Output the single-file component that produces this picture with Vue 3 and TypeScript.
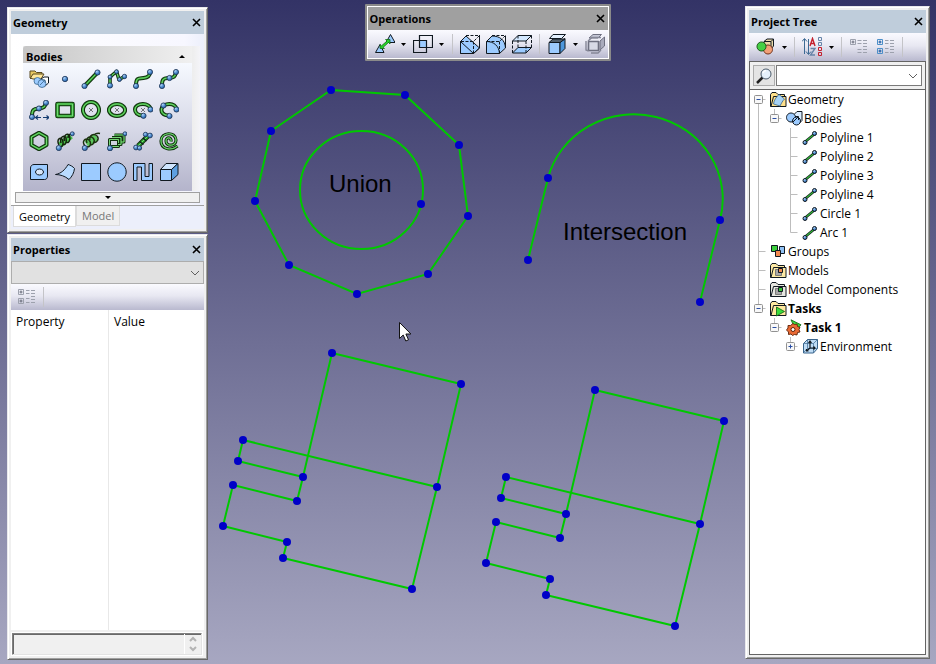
<script setup lang="ts">
import { ref } from 'vue'

type Point = [number, number]

/* ---------- icon drawing helpers ---------- */
const INK = '#101820'
const BODY = '#9ccbff'

const line = (d: string, width = 1, color = INK, extra = '') =>
  `<path d="${d}" fill="none" stroke="${color}" stroke-width="${width}" ${extra}/>`
const shape = (d: string, fill: string, color = INK, width = 1) =>
  `<path d="${d}" fill="${fill}" stroke="${color}" stroke-width="${width}" stroke-linejoin="round"/>`
const dot = (x: number, y: number, r = 2.6) =>
  `<circle cx="${x}" cy="${y}" r="${r}" fill="url(#ball)" stroke="#1d3557" stroke-width="0.8"/>`
const tube = (d: string, width = 4.4) =>
  line(d, width, '#12300f', 'stroke-linejoin="round"') +
  line(d, width - 2, '#2aa52a', 'stroke-linejoin="round"') +
  line(d, 0.8, '#8be08b', 'stroke-linejoin="round"')
const cross = line('M8 8L12 12M12 8L8 12', 0.8, '#555')
const folder = (fill: string) =>
  shape('M.5 15.500V3.500l1.500-2h4l2 2h6.500v12z', fill) + shape('M1 15.500L3.500 5.500h12.500v10z', fill)

const bodyIcons: { name: string; art: string }[] = [
  {
    name: 'Import bodies',
    art:
      shape('M1 9V2h5l1.500 1.500H13V6H4L2 10z', '#e8c860', '#5a4a20') +
      shape('M1.500 9L4 5h11l-3 5H4z', '#ffe79a', '#5a4a20') +
      shape('M12 10l3-2h4.500v6L16 17z', '#ffffff') +
      `<circle cx="8.500" cy="12" r="3.500" fill="${BODY}" stroke="#38648c" stroke-width="0.800"/>` +
      `<circle cx="13" cy="14.500" r="4" fill="${BODY}" stroke="#38648c" stroke-width="0.800"/>` +
      line('M11 16l5-5M13 11h3v3', 0.8, '#38648c'),
  },
  { name: 'Point', art: dot(10, 10, 2.7) },
  { name: 'Line', art: tube('M3.500 17L16.500 3.500', 4) + dot(3.5, 17) + dot(16.5, 3.5) },
  {
    name: 'Polyline',
    art:
      tube('M3 16.500L3 8L9.500 2.500L12 10.500L17.500 7.500', 3.6) +
      dot(3, 16.5) + dot(3, 8, 2) + dot(9.5, 2.8, 2) + dot(12.5, 10.5, 2) + dot(17.5, 7.5, 2.2),
  },
  { name: 'Curve', art: tube('M3 16.500C3 8 6 9.500 10.500 9S17 7 17 3', 4) + dot(3, 17) + dot(17, 3) },
  {
    name: 'Spline',
    art: tube('M3 16.500C3 9 5 9.500 10 9S16 8 17 3', 4) + dot(3, 17) + dot(10.5, 9) + dot(17, 3),
  },
  {
    name: 'Curve by dimension',
    art:
      tube('M3 16C3 9 5 9 10 8.500S16 7 17 2.500', 4) + dot(3, 17) + dot(10, 8.5) + dot(17, 2.8) +
      line('M7 17.500h5M14 17.500h5.500M9 15.500l-2.500 2L9 19.500M17.500 15.500l2.500 2l-2.500 2', 1.1, '#123a70'),
  },
  { name: 'Rectangle', art: tube('M2.500 4h15v12h-15z', 4.6) },
  { name: 'Circle', art: tube('M10 2a8 8 0 1 0 .01 0z', 4) + cross },
  { name: 'Ellipse', art: tube('M10 4a8 6 0 1 0 .01 0z', 4) + cross },
  {
    name: 'Ellipse arc',
    art: tube('M10 15.500C4 15.500 2 12 2 9.500C2 2.500 17.500 2 17.500 9.500', 4) + cross + dot(10.5, 15.8) + dot(17.5, 9.5),
  },
  {
    name: 'Three-point arc',
    art:
      tube('M10 15.500C4 15.500 2 12 2.500 9C4 2.500 17 2 17.500 9.500', 4) + dot(4.5, 5.5) + dot(10.5, 16) + dot(17.5, 9.5),
  },
  { name: 'Polygon', art: tube('M10 1.800L17.500 6V14L10 18.200L2.500 14V6z', 4) },
  {
    name: 'Helix',
    art:
      line('M5 14L16 5', 6, '#49c049') +
      line('M4 14C1 8 6 5 7.500 9S7 17 5.500 15M6 12C4 6 10 3 11 7S10 15 8.500 13M9.500 10C8 4 13 1 14.500 5S13 13 12 11M13 7c0-3 2-4 4-4', 1.5, '#14240c') +
      dot(3.8, 17) + dot(17.3, 2.8, 2),
  },
  {
    name: 'Conical helix',
    art:
      line('M5.500 13L15.500 6', 8, '#5cc65c') +
      line('M4 15C0 10 5 6 8 9S9 17 6 15.500M6 12C4 7 9 4 12 7S12 15 9 13.500M9 9C8 4 13 2 16 5S15 13 12 11M13 4c2-2 4-2 6-1.500', 1.4, '#1c3010') +
      dot(3.8, 17),
  },
  {
    name: 'Rectangular helix',
    art:
      tube('M2.500 8.500h9v7h-9z', 3) + tube('M5 6.500h9v7H11M7.500 4h9.500v7H14', 3) + dot(3, 17.2) + dot(18, 2.8, 2),
  },
  {
    name: 'Twisted line',
    art:
      tube('M5 15L15 5', 5) + line('M6.500 10.500l4 3M10 7l3.500 3', 1.1) +
      dot(3, 16.5, 2.4) + dot(6.5, 17, 2.2) + dot(12.5, 3.5, 2.2) + dot(17, 4.5, 2.4),
  },
  {
    name: 'Spiral',
    art: tube('M18.500 15C12 20.500 2 18 2 10C2 1 16.500 0 17 9C17 15.500 7 16 7 10C7 5.500 13 6 12 10.500', 3.2),
  },
  {
    name: 'Plate with hole',
    art:
      shape('M1.500 17.500V6C1.500 4 3 2.500 5 2.500h13.500V14c0 2-1 3.500-3 3.500z', BODY) +
      shape('M10.500 7a4 3 0 1 0 .01 0z', '#d8e6f8'),
  },
  { name: 'Surface', art: shape('M.5 12.500C6 11.500 10 8 13 2.500C15 3 18 4.500 19.500 6.500C19 11 17 14.500 14 17.500C10 14 5 12.500 .5 12.500z', '#b9dbff') },
  { name: 'Rectangular face', art: shape('M.5 1.500h19v17h-19z', BODY) },
  { name: 'Circular face', art: shape('M10 .8a9.200 9.200 0 1 0 .01 0z', BODY) },
  { name: 'Strip', art: shape('M.5 1.500h11.500v13h4v-13h3.500v17H8.500V5H4v13.500H.5z', BODY) },
  {
    name: 'Box',
    art:
      shape('M1.500 7.500h11v11h-11z', BODY) + shape('M1.500 7.500L7 1.500h12L12.500 7.500z', '#cfe5ff') +
      shape('M12.500 7.500L19 1.500v11l-6.500 6z', '#5d9fe0'),
  },
]

const treeToggle = (color: string, box: string) =>
  line('M2.500 2.500h5v5h-5zM2.500 11.500h5v5h-5z', 1, box) +
  line('M3.500 5h3M5 3.500v3M3.500 14h3M5 12.500v3', 1, color) +
  line('M10 3.500h3.500M10 6.500h3.500M10 11.500h3.500M10 15.500h3.500M15 3.500h4M15 6.500h4M15 9.500h4M15 12.500h4M15 15.500h4', 1, '#9da1ad')

const art = {
  transform:
    shape('M.5 18.500L5 10.500l4 8z', BODY) + shape('M11 8.500l4.500-8L20 8.500z', BODY) +
    shape('M5 14.500V10.500l1.500 1.300L12 7L10.500 5.500h4.500V10L13.500 8.500L8 13.500L9.500 14.500z', '#28d42c', '#0d6010', 0.7),
  boolean: shape('M6.500 6.500h7v7h-7z', BODY) + line('M6.500 1.500h13v12h-13zM.5 6.500h13v12H.5z', 1.2),
  chamfer:
    shape('M.5 7.500L6 2l13.500 12-6 5.500H.5z', BODY) + line('M.5 7.500L13.500 19.500M.5 7.500v12M13.500 19.500l6-5.500V1') +
    line('M6 1.500h13.500L13.500 7.500H.5M13.500 7.500v12', 1, INK, 'stroke-dasharray="3 1.5"'),
  fillet:
    shape('M.5 7.500L6 2c8 0 13 4 13.500 12l-6 5.500H.5z', BODY) + line('M.5 7.500C8 7.500 13 12 13.500 19.500M19.500 14V2') +
    line('M6 1.500h13.500L13.500 7.500H.5M13.500 7.500v12', 1, INK, 'stroke-dasharray="3 1.5"'),
  shell:
    shape('M.5 7L6 1.500h13.500L14 7z', '#d3e8ff') + shape('M.5 19L6 13.500h13.500L14 19z', BODY) +
    line('M.5 7v12M14 7v12M6 1.500v12M19.500 1.500v12', 1, INK, 'stroke-dasharray="3 1.5"'),
  extrude:
    shape('M2 8.500h11v11H2z', BODY) + shape('M13 8.500l5-4v10l-5 5z', '#4d97dc') + shape('M2 8.500l4-3.500h12l-5 3.500z', '#52606e') +
    shape('M2.500 4.500L6 .5h12.500L14.500 4.500z', '#e4f1ff'),
  hollow:
    shape('M4 4l4-3.500h8.500L13 4z', '#c5c7d6', '#6e7080') + shape('M15 7l4.500-4v9L15 16z', '#a9abbc', '#6e7080') +
    shape('M3.500 7.500h10v9h-10z', '#d8dae6', '#6e7080', 1.6) + line('M1 7v9l2.500 1M6 19h7l3-3M3 7l4-3.500h9', 1.4, '#858797'),
  display:
    shape('M9 4.500L12 2h6.500v7L16 12H9z', '#ead9a8') + line('M9 4.500h7V12M16 4.500L18.500 2') +
    shape('M13 8a4.500 4.500 0 1 0 .01 0z', '#f2a078', '#6e3018') + shape('M6.500 5a4.500 4.500 0 1 0 .01 0z', '#45cf45', '#174d17'),
  sort:
    line('M2.500 17V2M0 4.500L2.500 1.500L5 4.500M6.500 2v15M4 14.500L6.500 17.500L9 14.500', 1, '#3d6a94') +
    line('M8 9L10.500 1.500L13 9M9 6.500h3.500', 1.4, '#c4202c') + line('M8.500 11.500h4.500L8.500 18h4.500', 1.4, '#6784a8') +
    line('M16.500.500h3v3h-3zM16.500 5.500h3v3h-3z', 1, '#6784a8') + line('M16.500 10.500h3v3h-3zM16.500 15.500h3v3h-3z', 1, '#c4202c'),
  collapse:
    line('M1.500 2.500h5v5h-5z', 1, '#9da1ad') + line('M2.500 5h3M4 3.500v3', 1, '#666b78') +
    line('M8.500 3.500h4M8.500 6.500h4M14 3.500h4M14 6.500h4M14 9.500h4M8.500 12.500h4M14 12.500h4M8.500 15.500h4M14 15.500h4', 1, '#9da1ad'),
  expand: treeToggle('#0b4f9c', '#4c8fc9'),
  expandOff: treeToggle('#666b78', '#9da1ad'),
} as const

/* ---------- project tree ---------- */
const smallDot = (x: number, y: number) => `<circle cx="${x}" cy="${y}" r="2" fill="url(#ball)" stroke="${INK}" stroke-width="1"/>`
const treeArt: Record<string, string> = {
  geometry: folder('#ffe08a') + shape('M3.500 13C4 9.500 6 6 9 3.500l5.500 4.500c-2 2-3 4-4.500 7z', '#a6d2f5', '#38648c', 0.8),
  bodies:
    shape('M8 4.500L11 1.500h5v9l-3 3z', '#d9ecff') + shape('M5 3a4.500 4.500 0 1 0 .01 0z', BODY) +
    shape('M10.500 7a4 4 0 1 0 .01 0z', BODY) + line('M7 12l5-5M9 6.500h3.500V10'),
  line: line('M3.500 12.500L12.500 5', 2.6, INK) + line('M3.500 12.500L12.500 5', 1.2, '#35b835') + smallDot(3, 13.5) + smallDot(12.5, 4.5),
  groups: shape('M1.500 2.500h6v6h-6z', '#3ccf3c') + shape('M9.500 3.500h5v7h-5z', '#8fc1f5') + shape('M5.500 7.500h5v6h-5z', '#f28a50'),
  models: folder('#fde9a4') + shape('M5.500 7.500h3v3h3v3h-6z', '#a8a8a8', '#666', 0.8) + shape('M8.500 6.500h4v4h-4z', '#f28a50'),
  components: folder('#e6e6e0') + shape('M5.500 7.500h3v3h3v3h-6z', '#a8a8a8', '#666', 0.8) + shape('M8.500 6.500h4v4h-4z', '#35c435'),
  tasks: folder('#ffe9a0') + shape('M6.500 7l8 4.500l-8 4.500z', '#3bdc3b', '#0d6010', 0.8),
  task:
    shape('M5 .8l10 5-5 6z', '#3bdc3b', '#0d6010', 0.8) +
    shape('M7 4.500l1.500 1 2.500-.500.500 2.500 2.500 1-1 2 1 2.500-2.500.500-.500 2.500-2.500-.500L6.500 16.500l-1.500-1.500-2.500.500v-2.500L.5 11 2 9 2 6.500l2.500 0z', '#ea6a34', '#5c2208', 0.9) +
    '<circle cx="7" cy="10.500" r="2" fill="#fff" stroke="#5c2208"/>',
  environment:
    shape('M1.500 5.500L5.500 1.500h10v9l-4 4.500h-10z', '#bfdcf5', '#38648c') + line('M1.500 5.500h10v9.500M11.500 5.500l4-4M5.500 1.500v9h10M5.500 10.500l-4 4', 0.7, '#38648c') +
    line('M8 3v7M6.500 5L8 3l1.500 2M8 10h5M11.500 8.500l1.500 1.500-1.500 1.500M8 10l-3.500 3M4.500 11v2h2', 1.2),
}

interface TreeRow {
  label: string
  icon: string
  level: number
  toggle?: 'open' | 'closed'
  rails?: number[]
  first?: boolean
  last?: boolean
  strong?: boolean
}
const tree: TreeRow[] = [
  { label: 'Geometry', icon: 'geometry', level: 0, toggle: 'open', first: true },
  { label: 'Bodies', icon: 'bodies', level: 1, toggle: 'open', rails: [0], last: true },
  ...['Polyline 1', 'Polyline 2', 'Polyline 3', 'Polyline 4', 'Circle 1'].map((label) => ({ label, icon: 'line', level: 2, rails: [0] })),
  { label: 'Arc 1', icon: 'line', level: 2, rails: [0], last: true },
  { label: 'Groups', icon: 'groups', level: 0 },
  { label: 'Models', icon: 'models', level: 0 },
  { label: 'Model Components', icon: 'components', level: 0 },
  { label: 'Tasks', icon: 'tasks', level: 0, toggle: 'open', last: true, strong: true },
  { label: 'Task 1', icon: 'task', level: 1, toggle: 'open', last: true, strong: true },
  { label: 'Environment', icon: 'environment', level: 2, toggle: 'closed', last: true },
]
const railX = (level: number) => 8.5 + 16 * level
const guides = (row: TreeRow) => {
  const x = railX(row.level)
  const own = `M${x} ${row.first ? 9.5 : 0}V${row.last ? 9.5 : 19}M${x} 9.5h7`
  return (row.rails ?? []).map((r) => `M${railX(r)} 0V19`).join('') + own
}

/* ---------- drawing ---------- */
const polygon: Point[] = [[331, 90], [405, 95], [459, 145], [468, 216], [428, 274], [357, 294], [289, 265], [255, 201], [271, 131]]
const outline: Point[] = [[332, 353], [461, 384], [437, 487], [412, 589], [283, 558], [287, 542], [223, 526], [233, 485], [297, 501], [303, 477]]
const branch: Point[] = [[303, 477], [238, 461], [243, 440], [437, 487]]
const copies: Point[] = [[0, 0], [263, 37]]
const arcNodes: Point[] = [[548, 178], [528, 260], [720, 220], [700, 302]]
const toPoints = (points: Point[]) => points.map((p) => p.join(',')).join(' ')

const tab = ref('Geometry')
const query = ref('')
</script>

<template>
  <main class="workspace">
    <svg class="viewport" viewBox="0 0 936 664" preserveAspectRatio="xMidYMid slice" aria-label="Model view">
      <defs>
        <radialGradient id="ball" cx="0.35" cy="0.3" r="0.8">
          <stop offset="0" stop-color="#b5d6f7" />
          <stop offset="0.5" stop-color="#4f8dd0" />
          <stop offset="1" stop-color="#1f5596" />
        </radialGradient>
      </defs>
      <g class="edges">
        <polygon :points="toPoints(polygon)" />
        <ellipse cx="361.5" cy="190" rx="61.5" ry="59" />
        <path d="M528 260L548 178A88.500 84.500 0 0 1 720 220L700 302" />
        <g v-for="([x, y], i) in copies" :key="i" :transform="`translate(${x} ${y})`">
          <polygon :points="toPoints(outline)" />
          <polyline :points="toPoints(branch)" />
        </g>
      </g>
      <g class="nodes">
        <circle v-for="([x, y], i) in [...polygon, ...arcNodes]" :key="i" :cx="x" :cy="y" r="4" />
        <circle cx="421" cy="204" r="4" />
        <g v-for="([dx, dy], c) in copies" :key="c" :transform="`translate(${dx} ${dy})`">
          <circle v-for="([x, y], i) in [...outline, ...branch.slice(1, 3)]" :key="i" :cx="x" :cy="y" r="4" />
        </g>
      </g>
      <text x="329" y="192">Union</text>
      <text x="563" y="240">Intersection</text>
      <path class="pointer" d="M399.500 322.500v16l3.700-3.500 2.600 6 2.700-1.200-2.600-5.800h5z" />
    </svg>

    <div class="layout">
      <div class="left">
        <section class="panel">
          <header class="title">
            <h2>Geometry</h2>
            <button class="close" aria-label="Close Geometry"><svg viewBox="0 0 9 9"><path d="M1 1l7 7M8 1L1 8" /></svg></button>
          </header>
          <div class="geometry">
            <div class="toolbox">
              <button class="group">
                Bodies
                <svg width="6" height="3"><path d="M0 3L3 0L6 3z" /></svg>
              </button>
              <div class="palette">
                <button v-for="tool in bodyIcons" :key="tool.name" :aria-label="tool.name">
                  <svg width="20" height="20" v-html="tool.art"></svg>
                </button>
              </div>
            </div>
            <button class="more" aria-label="More tools"><svg width="6" height="3"><path d="M0 0L3 3L6 0z" /></svg></button>
            <nav class="tabs">
              <button v-for="name in ['Geometry', 'Model']" :key="name" :class="{ active: tab === name }" @click="tab = name">{{ name }}</button>
            </nav>
          </div>
        </section>

        <section class="panel properties">
          <header class="title">
            <h2>Properties</h2>
            <button class="close" aria-label="Close Properties"><svg viewBox="0 0 9 9"><path d="M1 1l7 7M8 1L1 8" /></svg></button>
          </header>
          <div class="picker">
            <select aria-label="Object" disabled></select>
            <svg width="10" height="6"><path d="M1 1l4 4 4-4" /></svg>
          </div>
          <div class="toolbar short">
            <button class="tool" aria-label="Expand all" disabled><svg width="20" height="20" v-html="art.expandOff"></svg></button>
            <i class="sep"></i>
          </div>
          <table>
            <thead>
              <tr><th>Property</th><th>Value</th></tr>
            </thead>
            <tbody>
              <tr><td></td><td></td></tr>
            </tbody>
          </table>
          <div class="hint">
            <textarea aria-label="Description" readonly></textarea>
            <span class="spin"><svg width="8" height="16"><path d="M1 5l3-3 3 3M1 11l3 3 3-3" /></svg></span>
          </div>
        </section>
      </div>

      <div class="center">
        <section class="operations">
          <header class="title">
            <h2>Operations</h2>
            <button class="close" aria-label="Close Operations"><svg viewBox="0 0 9 9"><path d="M1 1l7 7M8 1L1 8" /></svg></button>
          </header>
          <div class="toolbar">
            <button class="tool" aria-label="Transform"><svg width="20" height="20" v-html="art.transform"></svg></button>
            <button class="caret" aria-label="Transform options"><svg width="5" height="3"><path d="M0 0h5L2.500 3z" /></svg></button>
            <button class="tool" aria-label="Boolean"><svg width="20" height="20" v-html="art.boolean"></svg></button>
            <button class="caret" aria-label="Boolean options"><svg width="5" height="3"><path d="M0 0h5L2.500 3z" /></svg></button>
            <i class="sep"></i>
            <button class="tool" aria-label="Chamfer"><svg width="20" height="20" v-html="art.chamfer"></svg></button>
            <button class="tool" aria-label="Fillet"><svg width="20" height="20" v-html="art.fillet"></svg></button>
            <button class="tool" aria-label="Shell"><svg width="20" height="20" v-html="art.shell"></svg></button>
            <i class="sep"></i>
            <button class="tool" aria-label="Extrude"><svg width="20" height="20" v-html="art.extrude"></svg></button>
            <button class="caret" aria-label="Extrude options"><svg width="5" height="3"><path d="M0 0h5L2.500 3z" /></svg></button>
            <button class="tool" aria-label="Hollow" disabled><svg width="20" height="20" v-html="art.hollow"></svg></button>
          </div>
        </section>
      </div>

      <section class="panel project">
        <header class="title">
          <h2>Project Tree</h2>
          <button class="close" aria-label="Close Project Tree"><svg viewBox="0 0 9 9"><path d="M1 1l7 7M8 1L1 8" /></svg></button>
        </header>
        <div class="toolbar">
          <button class="tool" aria-label="Display"><svg width="20" height="20" v-html="art.display"></svg></button>
          <button class="caret" aria-label="Display options"><svg width="5" height="3"><path d="M0 0h5L2.500 3z" /></svg></button>
          <i class="sep"></i>
          <button class="tool" aria-label="Sort"><svg width="20" height="20" v-html="art.sort"></svg></button>
          <button class="caret" aria-label="Sort options"><svg width="5" height="3"><path d="M0 0h5L2.500 3z" /></svg></button>
          <i class="sep"></i>
          <button class="tool" aria-label="Collapse all" disabled><svg width="20" height="20" v-html="art.collapse"></svg></button>
          <button class="tool" aria-label="Expand all"><svg width="20" height="20" v-html="art.expand"></svg></button>
          <i class="sep"></i>
        </div>
        <form class="search" @submit.prevent>
          <button class="find" aria-label="Search">
            <svg width="18" height="18">
              <path d="M2 16L7.500 10.500" stroke="#222" stroke-width="2.500" />
              <circle cx="11" cy="7" r="5" fill="#e6f1fb" stroke="#4a5a6a" />
              <path d="M8 6a3.500 3.500 0 0 1 3-2.500" fill="none" stroke="#fff" stroke-width="1.500" />
            </svg>
          </button>
          <div class="combo">
            <input v-model="query" aria-label="Search the project" />
            <button type="button" aria-label="Recent searches"><svg width="10" height="6"><path d="M1 1l4 4 4-4" /></svg></button>
          </div>
        </form>
        <ul class="tree">
          <li v-for="row in tree" :key="row.label" :class="{ strong: row.strong }">
            <svg :width="20 + 16 * row.level" height="19">
              <path class="guide" :d="guides(row)" />
              <template v-if="row.toggle">
                <rect class="box" :x="railX(row.level) - 4" y="5.5" width="8" height="8" rx="1" />
                <path class="sign" :d="`M${railX(row.level) - 2} 9.5h4` + (row.toggle === 'closed' ? `m-2 -2v4` : '')" />
              </template>
            </svg>
            <svg width="18" height="17" v-html="treeArt[row.icon]"></svg>
            <span>{{ row.label }}</span>
          </li>
        </ul>
      </section>
    </div>
  </main>
</template>

<style>
body {
  margin: 0;
}
</style>

<style scoped>
.workspace {
  position: relative;
  min-height: 100vh;
  display: flex;
  background: linear-gradient(#333366, #a7a7c1);
  font: 12px/16px 'Open Sans', 'Noto Sans', sans-serif;
  color: #000;
}
.workspace * {
  box-sizing: border-box;
}
.viewport {
  position: absolute;
  inset: 0;
  width: 100%;
  height: 100%;
}
.edges {
  fill: none;
  stroke: #00c800;
  stroke-width: 2;
}
.nodes {
  fill: #0000c8;
}
.viewport text {
  font: 24px 'Liberation Sans', sans-serif;
}
.pointer {
  fill: #fff;
  stroke: #111;
}
.layout {
  position: relative;
  flex: 1;
  display: flex;
  min-width: 0;
  padding: 4px 6px 4px 7px;
}
button {
  border: 0;
  padding: 0;
  background: none;
  font: inherit;
  color: inherit;
  display: flex;
  align-items: center;
  justify-content: center;
}
svg {
  display: block;
  flex: none;
}

/* windows */
.panel {
  display: flex;
  flex-direction: column;
  padding: 3px;
  background: #f0f0f0;
  border: 1px solid;
  border-color: #e9e9ec #696969 #696969 #e9e9ec;
  box-shadow: inset 1px 1px #fff, inset -1px -1px #a0a0a0;
}
.title {
  display: flex;
  align-items: center;
  justify-content: space-between;
  height: 23px;
  padding: 0 3px 0 2px;
  background: #bfcddb;
}
.title h2 {
  margin: 0;
  font-size: 11px;
  font-weight: 700;
}
.close svg {
  width: 9px;
  height: 9px;
  fill: none;
  stroke: #000;
  stroke-width: 1.6;
}
.left {
  display: flex;
  flex-direction: column;
  gap: 1px;
  width: 201px;
  padding-top: 3px;
}
.center {
  flex: 1;
  display: flex;
  justify-content: center;
  align-items: flex-start;
  padding-left: 22px;
}
.project {
  width: 185px;
  margin: 2px 0 1px;
}

/* geometry palette */
.geometry {
  background: linear-gradient(to right, #fff, #f7f7ff 90%, #eceffb);
}
.toolbox {
  margin: 12px 4px 0 12px;
  padding-right: 8px;
  background: linear-gradient(to right, #eee 96%, #f4f4f8);
}
.group {
  display: flex;
  justify-content: space-between;
  width: 100%;
  height: 17px;
  padding: 4px 7px 0 3px;
  font-size: 11px;
  font-weight: 700;
  border-radius: 3px 0 0;
  background: linear-gradient(to right, #c6c6c6, #f0f0f0);
}
.palette {
  display: grid;
  grid-template-columns: repeat(6, 26px);
  grid-auto-rows: 31px;
  padding: 0 0 4px 3px;
  background: linear-gradient(#f6f9ff, #d8dae8 50%, #b4b4cb);
}
.more {
  height: 11px;
  margin: 1px 4px 2px;
  min-width: calc(100% - 8px);
  border: 1px solid #a0a0a0;
  background: #f0f0f0;
}
.tabs {
  display: flex;
  align-items: flex-start;
  height: 24px;
  padding-left: 2px;
  border-top: 1px solid #a0a0a0;
  background: #eceffb;
}
.tabs button {
  height: 20px;
  padding: 1px 5px 0;
  color: #777;
  background: #f0f0f0;
  border: 1px solid #dcdcdc;
  border-top: 0;
  font-size: 11px;
}
.tabs .active {
  height: 21px;
  color: #000;
  background: #fff;
}

/* toolbars */
.toolbar {
  display: flex;
  align-items: center;
  height: 28px;
  padding-left: 3px;
  background: linear-gradient(#fafaff, #e8e8f2 45%, #b9b9cf);
}
.short {
  height: 26px;
  padding-left: 2px;
}
.tool {
  width: 26px;
  height: 26px;
}
.caret {
  width: 12px;
  height: 26px;
}
.sep {
  width: 1px;
  height: 20px;
  margin: 0 4px;
  background: #c4c4c8;
}
.operations {
  padding: 1px;
  border: 2px solid #8a8a8a;
  background: #fff;
  border-radius: 1px;
}
.operations .title {
  background: #a0a0a0;
}
.operations .toolbar {
  padding: 0 0 0 4px;
}

/* properties */
.properties {
  flex: 1;
}
.picker {
  display: flex;
  align-items: center;
  height: 23px;
  padding-right: 3px;
  background: #e1e1e1;
  border: 1px solid #adadad;
}
.picker select {
  flex: 1;
  min-width: 0;
  height: 19px;
  border: 0;
  background: transparent;
  appearance: none;
}
.picker path,
.combo path {
  fill: none;
  stroke: #606060;
}
.spin path {
  fill: none;
  stroke: #b4b4b4;
  stroke-width: 2;
}
table {
  flex: 1;
  display: flex;
  flex-direction: column;
  background: #fff;
}
thead,
tbody,
tr {
  display: flex;
}
tbody {
  flex: 1;
}
tr {
  flex: 1;
}
th,
td {
  flex: 1;
  padding: 4px 5px;
  font-weight: 400;
  text-align: left;
}
th + th,
td + td {
  border-left: 1px solid #e8e8e8;
  flex: 0 0 96px;
}
.hint {
  display: flex;
  height: 22px;
  margin: 3px 2px 1px 1px;
  border: 1px solid;
  border-color: #808080 #e3e3e3 #e3e3e3 #808080;
  box-shadow: inset 1px 1px #696969;
  outline: 1px solid #fff;
  background: #f0f0f0;
}
.hint textarea {
  flex: 1;
  min-width: 0;
  border: 0;
  margin: 1px 0 0 1px;
  padding: 0;
  resize: none;
  overflow: hidden;
  background: transparent;
}
.spin {
  display: flex;
  align-items: center;
  justify-content: center;
  width: 17px;
  border-left: 1px solid #fff;
}

/* project tree */
.search {
  display: flex;
  gap: 1px;
  height: 28px;
  padding: 3px;
  border: 1px solid #646464;
  border-bottom: 0;
}
.find {
  flex: none;
  width: 22px;
  border: 1px solid #adadad;
  background: #e4e4e4;
}
.combo {
  flex: 1;
  min-width: 0;
  display: flex;
  border: 1px solid #7a7a7a;
  background: #fff;
}
.combo input {
  flex: 1;
  min-width: 0;
  border: 0;
  padding: 0 3px;
  font: inherit;
  background: transparent;
  outline: 0;
}
.combo button {
  flex: none;
  width: 17px;
}
.tree {
  flex: 1;
  margin: 0;
  padding: 0;
  list-style: none;
  background: #fff;
  border: 1px solid #646464;
}
.tree li {
  display: flex;
  align-items: center;
  height: 19px;
  white-space: nowrap;
}
.strong {
  font-weight: 700;
}
.guide {
  fill: none;
  stroke: #bdbdbd;
}
.box {
  fill: #f8f8f8;
  stroke: #919191;
}
.sign {
  stroke: #2b4fa5;
  fill: none;
}
</style>
